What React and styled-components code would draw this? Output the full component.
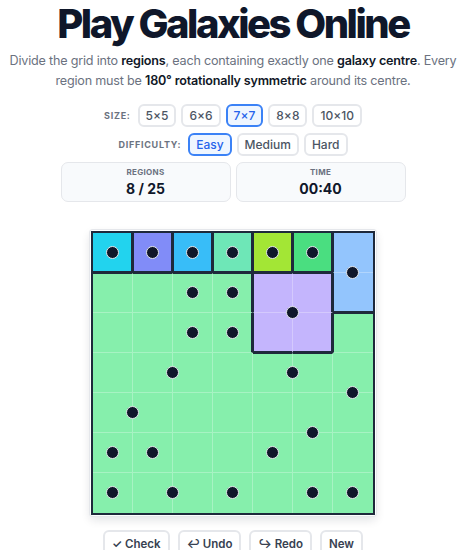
import React, { useState } from "react";
import styled, { createGlobalStyle } from "styled-components";

const GlobalStyle = createGlobalStyle`
  * { box-sizing: border-box; }
  body {
    margin: 0;
    background: #ffffff;
    font-family: Inter, "Noto Sans", "Liberation Sans", sans-serif;
    color: #111827;
  }
`;

// region map for the 7x7 board, "U" = unassigned
const REGIONS = [
  "ABCDEFG",
  "UUUUHHG",
  "UUUUHHU",
  "UUUUUUU",
  "UUUUUUU",
  "UUUUUUU",
  "UUUUUUU",
];

const COLORS = {
  A: "#22d3ee",
  B: "#818cf8",
  C: "#38bdf8",
  D: "#6ee7b7",
  E: "#a3e635",
  F: "#4ade80",
  G: "#93c5fd",
  H: "#c4b5fd",
  U: "#86efac",
};

// dots in half-cell units (odd = cell centre, even = edge)
const DOTS = [
  [1, 1], [3, 1], [5, 1], [7, 1], [9, 1], [11, 1],
  [13, 2],
  [5, 3], [7, 3], [5, 5], [7, 5],
  [10, 4],
  [4, 7], [10, 7],
  [13, 8],
  [2, 9],
  [11, 10],
  [1, 11], [3, 11], [9, 11],
  [1, 13], [4, 13], [7, 13], [11, 13], [13, 13],
];

const CELL = 40;
const EDGE = 2;

const App = () => {
  const [size, setSize] = useState("7×7");
  const [level, setLevel] = useState("Easy");

  const at = (r, c) => (REGIONS[r] && REGIONS[r][c]) || null;

  return (
    <Page>
      <GlobalStyle />
      <Title>Play Galaxies Online</Title>
      <Intro>
        Divide the grid into <b>regions</b>, each containing exactly one{" "}
        <b>galaxy centre</b>. Every region must be{" "}
        <b>180° rotationally symmetric</b> around its centre.
      </Intro>

      <Controls>
        <Row>
          <Label>Size:</Label>
          {["5×5", "6×6", "7×7", "8×8", "10×10"].map((s) => (
            <Chip key={s} $active={size === s} onClick={() => setSize(s)}>
              {s}
            </Chip>
          ))}
        </Row>
        <Row>
          <Label>Difficulty:</Label>
          {["Easy", "Medium", "Hard"].map((d) => (
            <Chip key={d} $active={level === d} onClick={() => setLevel(d)}>
              {d}
            </Chip>
          ))}
        </Row>
      </Controls>

      <Stats>
        <StatCard>
          <StatLabel>Regions</StatLabel>
          <StatValue>8 / 25</StatValue>
        </StatCard>
        <StatCard>
          <StatLabel>Time</StatLabel>
          <StatValue>00:40</StatValue>
        </StatCard>
      </Stats>

      <BoardWrap>
        <Board>
          {REGIONS.map((line, r) =>
            line.split("").map((id, c) => {
              const right = c < 6 && at(r, c + 1) !== id;
              const bottom = r < 6 && at(r + 1, c) !== id;
              const left = c > 0 && at(r, c - 1) !== id;
              const top = r > 0 && at(r - 1, c) !== id;
              return (
                <Cell
                  key={`${r}-${c}`}
                  $color={COLORS[id]}
                  $right={right}
                  $bottom={bottom}
                  $left={left}
                  $top={top}
                  $lastCol={c === 6}
                  $lastRow={r === 6}
                />
              );
            })
          )}
          {DOTS.map(([x, y], i) => (
            <Dot
              key={i}
              style={{ left: (x * CELL) / 2 - 7, top: (y * CELL) / 2 - 7 }}
            />
          ))}
        </Board>
      </BoardWrap>

      <Actions>
        <ActionButton>✓ Check</ActionButton>
        <ActionButton>↩ Undo</ActionButton>
        <ActionButton>↪ Redo</ActionButton>
        <ActionButton>New</ActionButton>
      </Actions>
    </Page>
  );
};

const Page = styled.div`
  display: flex;
  flex-direction: column;
  align-items: center;
  padding: 2px 0 0;
  text-align: center;
`;

const Title = styled.h1`
  margin: 0;
  font-size: 40px;
  line-height: 44px;
  font-weight: 800;
  letter-spacing: -2.5px;
  color: #0f172a;
`;

const Intro = styled.p`
  width: 452px;
  margin: 5px 0 0;
  font-size: 12.6px;
  line-height: 20px;
  letter-spacing: -0.2px;
  color: #6b7280;

  b {
    font-weight: 600;
    color: #111827;
  }
`;

const Controls = styled.div`
  margin-top: 13px;
  display: flex;
  flex-direction: column;
  gap: 6px;
`;

const Row = styled.div`
  display: flex;
  align-items: center;
  justify-content: center;
  gap: 5px;
`;

const Label = styled.span`
  margin-right: 2px;
  font-size: 9px;
  font-weight: 700;
  letter-spacing: 0.08em;
  text-transform: uppercase;
  color: #6b7280;
`;

const Chip = styled.button`
  height: 23px;
  padding: 0 6px;
  border: 2px solid ${({ $active }) => ($active ? "#3b82f6" : "#e5e7eb")};
  border-radius: 6px;
  background: ${({ $active }) => ($active ? "#eff6ff" : "#ffffff")};
  color: ${({ $active }) => ($active ? "#2563eb" : "#4b5563")};
  font-family: inherit;
  font-size: 12px;
  font-weight: 500;
  cursor: pointer;
`;

const Stats = styled.div`
  margin-top: 6px;
  display: flex;
  gap: 5px;
`;

const StatCard = styled.div`
  width: 170px;
  height: 40px;
  display: flex;
  flex-direction: column;
  align-items: center;
  justify-content: center;
  gap: 3px;
  border: 1px solid #e5e7eb;
  border-radius: 7px;
  background: #f8fafc;
`;

const StatLabel = styled.div`
  font-size: 8px;
  font-weight: 700;
  letter-spacing: 0.04em;
  text-transform: uppercase;
  color: #6b7280;
`;

const StatValue = styled.div`
  font-size: 14px;
  font-weight: 700;
  color: #0f172a;
`;

const BoardWrap = styled.div`
  margin-top: 28px;
  padding: 1px;
  border-radius: 3px;
  background: #ffffff;
  box-shadow: 0 0 0 1px #e5e7eb, 0 4px 10px rgba(15, 23, 42, 0.12);
`;

const Board = styled.div`
  position: relative;
  display: grid;
  grid-template-columns: repeat(7, ${CELL}px);
  grid-auto-rows: ${CELL}px;
  border: ${EDGE}px solid #1e293b;
`;

const Cell = styled.div`
  background: ${({ $color }) => $color};
  border-right: ${({ $right, $lastCol }) =>
    $lastCol ? "0" : $right ? "2px solid #1e293b" : "1px solid rgba(255,255,255,0.28)"};
  border-bottom: ${({ $bottom, $lastRow }) =>
    $lastRow ? "0" : $bottom ? "2px solid #1e293b" : "1px solid rgba(255,255,255,0.28)"};
  border-left: ${({ $left }) => ($left ? "1px solid #1e293b" : "0")};
  border-top: ${({ $top }) => ($top ? "1px solid #1e293b" : "0")};
`;

const Dot = styled.span`
  position: absolute;
  width: 13px;
  height: 13px;
  border-radius: 50%;
  background: #0f172a;
  border: 1.5px solid #e5e7eb;
`;

const Actions = styled.div`
  margin-top: 14px;
  display: flex;
  gap: 8px;
`;

const ActionButton = styled.button`
  height: 28px;
  padding: 0 7px;
  border: 2px solid #e5e7eb;
  border-radius: 6px;
  background: #ffffff;
  color: #374151;
  font-family: inherit;
  font-size: 11.5px;
  font-weight: 600;
  cursor: pointer;
`;

export default App;
